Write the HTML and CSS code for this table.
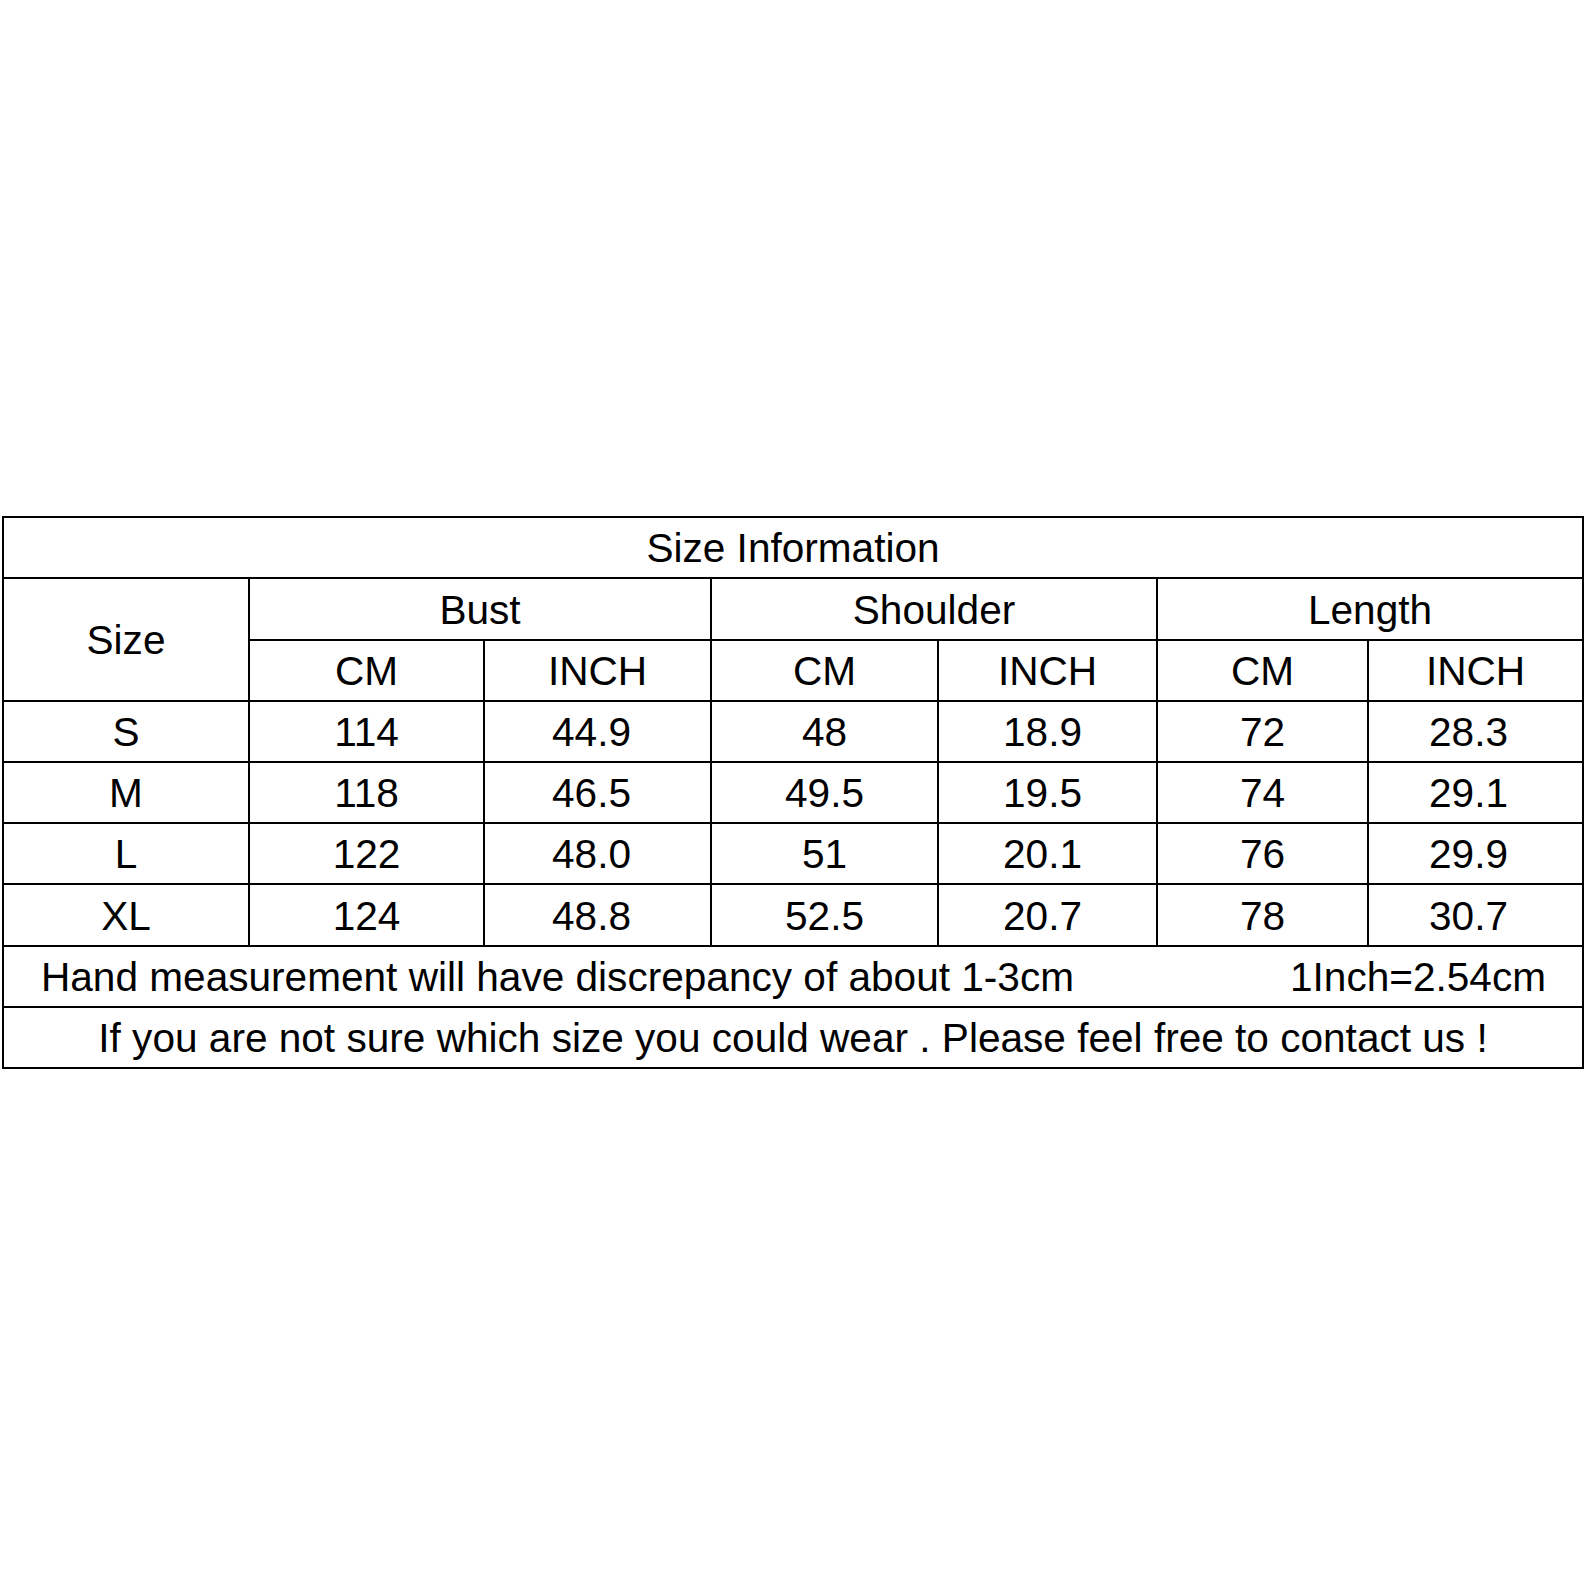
FILE: index.html
```html
<!DOCTYPE html>
<html lang="en">
<head>
<meta charset="utf-8">
<title>Size Information</title>
<link rel="stylesheet" href="styles.css">
</head>
<body>
<table class="size-table">
  <colgroup>
    <col class="c-size">
    <col class="c-bcm">
    <col class="c-binch">
    <col class="c-scm">
    <col class="c-sinch">
    <col class="c-lcm">
    <col class="c-linch">
  </colgroup>
  <tr class="r61"><td colspan="7">Size Information</td></tr>
  <tr class="r62">
    <td rowspan="2">Size</td>
    <td colspan="2">Bust</td>
    <td colspan="2">Shoulder</td>
    <td colspan="2">Length</td>
  </tr>
  <tr class="r61">
    <td>CM</td><td>INCH</td><td>CM</td><td>INCH</td><td>CM</td><td>INCH</td>
  </tr>
  <tr class="r61"><td>S</td><td>114</td><td class="bi">44.9</td><td>48</td><td class="si">18.9</td><td>72</td><td class="li">28.3</td></tr>
  <tr class="r61"><td>M</td><td>118</td><td class="bi">46.5</td><td>49.5</td><td class="si">19.5</td><td>74</td><td class="li">29.1</td></tr>
  <tr class="r61"><td>L</td><td>122</td><td class="bi">48.0</td><td>51</td><td class="si">20.1</td><td>76</td><td class="li">29.9</td></tr>
  <tr class="r62"><td>XL</td><td>124</td><td class="bi">48.8</td><td>52.5</td><td class="si">20.7</td><td>78</td><td class="li">30.7</td></tr>
  <tr class="r61">
    <td colspan="7" class="note">
      <div class="note-inner"><span>Hand measurement will have discrepancy of about 1-3cm</span><span>1Inch=2.54cm</span></div>
    </td>
  </tr>
  <tr class="r61"><td colspan="7">If you are not sure which size you could wear . Please feel free to contact us !</td></tr>
</table>
</body>
</html>
```

FILE: styles.css
```css
html, body {
  margin: 0;
  padding: 0;
  background: #ffffff;
}

body {
  padding-top: 516px;
  padding-left: 2px;
  font-family: "Liberation Sans", Arial, sans-serif;
  color: #000000;
}

.size-table {
  border-collapse: collapse;
  table-layout: fixed;
  width: 1580px;
  font-size: 40.6px;
}

.c-size { width: 246px; }
.c-bcm { width: 235px; }
.c-binch { width: 227px; }
.c-scm { width: 227px; }
.c-sinch { width: 219px; }
.c-lcm { width: 211px; }
.c-linch { width: 215px; }

.size-table td {
  border: 2px solid #000000;
  padding: 2px 0 0 0;
  text-align: center;
  vertical-align: middle;
  line-height: 1.15;
  white-space: nowrap;
}

.size-table td.bi { padding-right: 12px; }
.size-table td.si { padding-right: 10px; }
.size-table td.li { padding-right: 14px; }

.r61 { height: 61px; }
.r62 { height: 62px; }

.note-inner {
  display: flex;
  justify-content: space-between;
  padding: 0 36px 0 37px;
}
```
